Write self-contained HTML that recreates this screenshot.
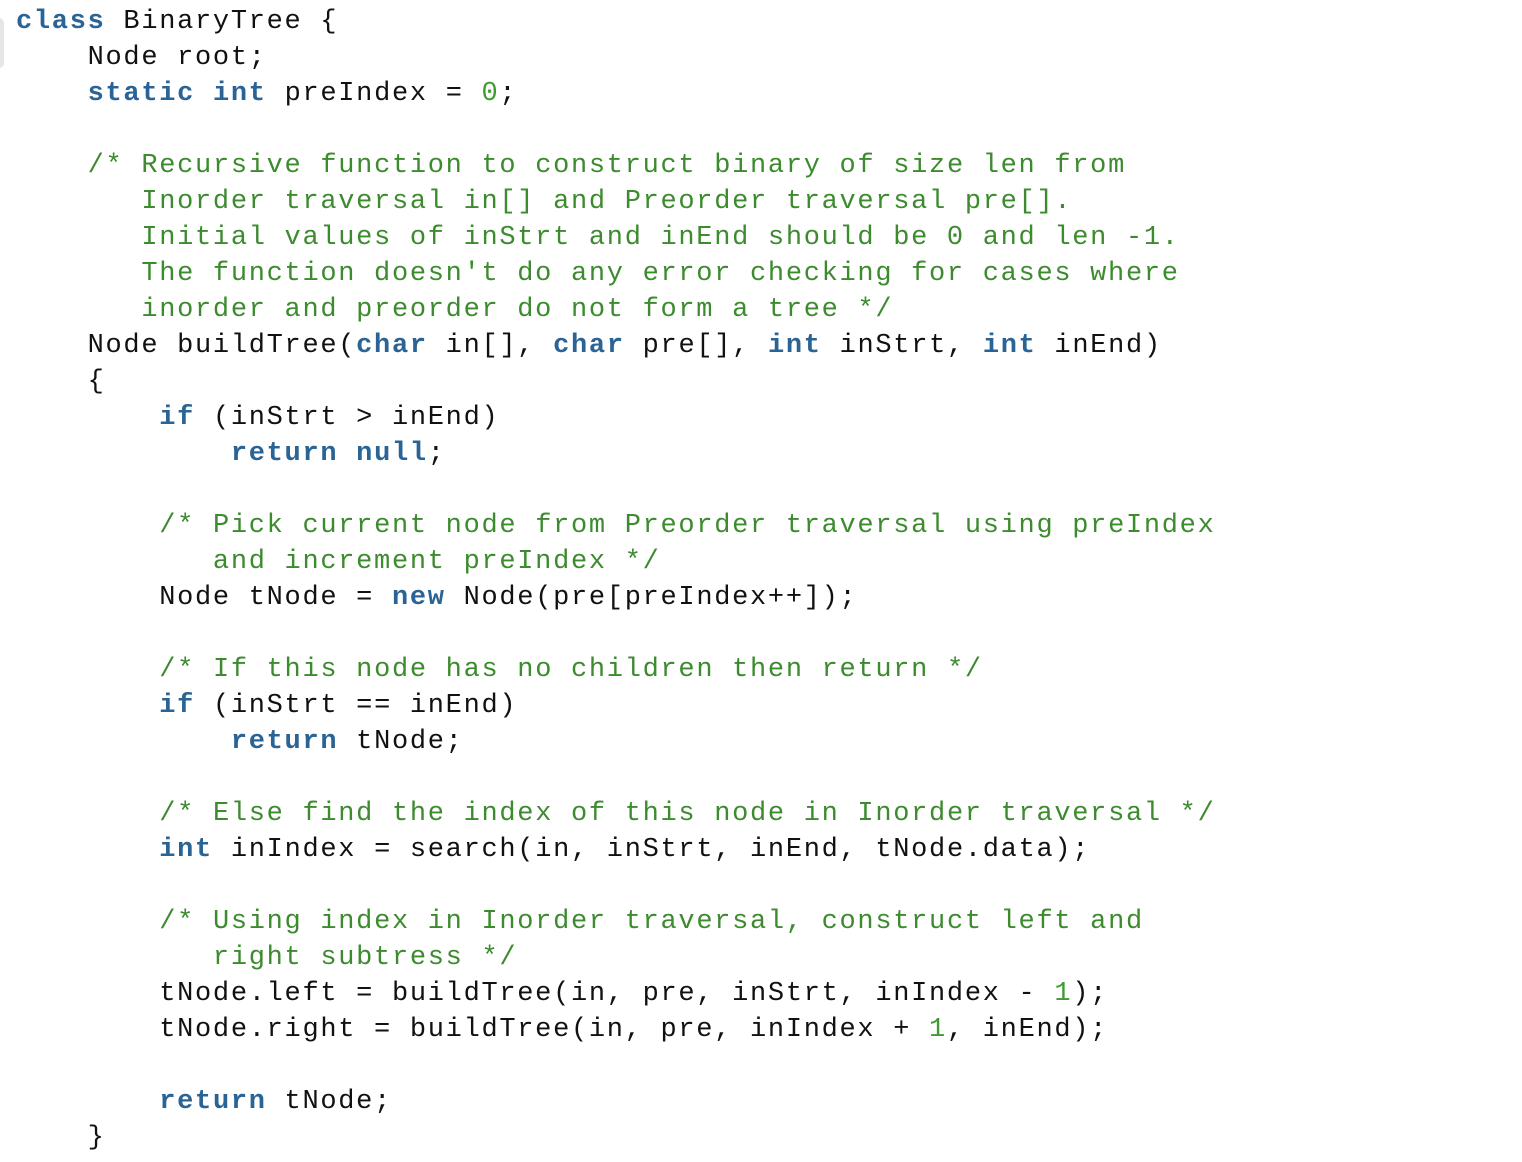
<!DOCTYPE html>
<html><head><meta charset="utf-8"><style>
html,body{margin:0;padding:0;background:#fff;width:1522px;height:1162px;overflow:hidden}
pre{position:absolute;left:16px;top:4px;margin:0;font-family:"Liberation Mono","Courier New",monospace;font-size:27px;letter-spacing:1.7px;line-height:36px;color:#111}
.k{color:#2a6496;font-weight:bold}
.c{color:#3d8b2f}
.n{color:#3d9b2f}
.edge{position:absolute;left:-6px;top:18px;width:10px;height:50px;border-radius:5px;background:#e6e6e6}
</style></head><body>
<div class="edge"></div>
<pre><span class="k">class</span> BinaryTree {
    Node root;
    <span class="k">static</span> <span class="k">int</span> preIndex = <span class="n">0</span>;

    <span class="c">/* Recursive function to construct binary of size len from
       Inorder traversal in[] and Preorder traversal pre[].
       Initial values of inStrt and inEnd should be 0 and len -1.
       The function doesn't do any error checking for cases where
       inorder and preorder do not form a tree */</span>
    Node buildTree(<span class="k">char</span> in[], <span class="k">char</span> pre[], <span class="k">int</span> inStrt, <span class="k">int</span> inEnd)
    {
        <span class="k">if</span> (inStrt &gt; inEnd)
            <span class="k">return</span> <span class="k">null</span>;

        <span class="c">/* Pick current node from Preorder traversal using preIndex
           and increment preIndex */</span>
        Node tNode = <span class="k">new</span> Node(pre[preIndex++]);

        <span class="c">/* If this node has no children then return */</span>
        <span class="k">if</span> (inStrt == inEnd)
            <span class="k">return</span> tNode;

        <span class="c">/* Else find the index of this node in Inorder traversal */</span>
        <span class="k">int</span> inIndex = search(in, inStrt, inEnd, tNode.data);

        <span class="c">/* Using index in Inorder traversal, construct left and
           right subtress */</span>
        tNode.left = buildTree(in, pre, inStrt, inIndex - <span class="n">1</span>);
        tNode.right = buildTree(in, pre, inIndex + <span class="n">1</span>, inEnd);

        <span class="k">return</span> tNode;
    }</pre>
</body></html>
